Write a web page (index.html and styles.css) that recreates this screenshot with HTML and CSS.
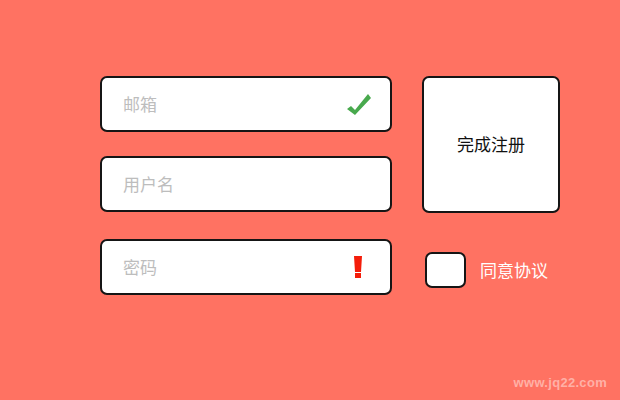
FILE: index.html
```html
<!DOCTYPE html>
<html lang="zh-CN">
<head>
    <meta charset="UTF-8">
    <meta name="viewport" content="width=device-width, initial-scale=1.0">
    <title>注册</title>
    <link rel="stylesheet" href="styles.css">
</head>
<body>
    <div class="form">
        <div class="fields">
            <div class="field">
                <span class="placeholder">邮箱</span>
                <svg class="icon-ok" width="24" height="22" viewBox="0 0 24 22">
                    <path d="M0 15 L4 12 L8 16 L21 0 L24 4 L8 21 Z" fill="#48a94d"/>
                </svg>
            </div>
            <div class="field field-user">
                <span class="placeholder">用户名</span>
            </div>
            <div class="field field-pass">
                <span class="placeholder">密码</span>
                <svg class="icon-warn" width="8" height="22" viewBox="0 0 8 22">
                    <path d="M0 0 H8 L7 16 H1 Z" fill="#f41d0a"/>
                    <rect x="1" y="17" width="6" height="5" fill="#f41d0a"/>
                </svg>
            </div>
        </div>
        <div class="side">
            <button class="submit">完成注册</button>
            <label class="agree">
                <span class="box"></span>
                <span class="agree-text">同意协议</span>
            </label>
        </div>
    </div>
    <div class="watermark">www.jq22.com</div>
</body>
</html>
```

FILE: styles.css
```css
body {
    margin: 0;
    height: 400px;
    background: #ff7262;
    font-family: "Noto Sans CJK SC", "Noto Sans", sans-serif;
    position: relative;
    overflow: hidden;
}
.form {
    display: flex;
    gap: 30px;
    padding: 76px 0 0 100px;
}
.fields {
    display: flex;
    flex-direction: column;
    width: 292px;
}
.field {
    height: 56px;
    box-sizing: border-box;
    background: #fff;
    border: 2px solid #151515;
    border-radius: 7px;
    display: flex;
    align-items: center;
    justify-content: space-between;
    padding: 0 19px 2px 21px;
}
.field-user {
    margin-top: 24px;
}
.field-pass {
    margin-top: 27px;
    padding-right: 28px;
}
.placeholder {
    color: #bdbdbd;
    font-size: 17px;
}
.icon-ok {
    display: block;
    margin-top: 3px;
}
.icon-warn {
    display: block;
    margin-top: 2px;
}
.side {
    display: flex;
    flex-direction: column;
}
.submit {
    width: 138px;
    height: 137px;
    background: #fff;
    border: 2px solid #151515;
    border-radius: 7px;
    font-family: inherit;
    font-size: 17px;
    color: #111;
    padding: 0 0 2px;
}
.agree {
    display: flex;
    align-items: center;
    gap: 14px;
    margin: 39px 0 0 3px;
}
.box {
    width: 41px;
    height: 36px;
    box-sizing: border-box;
    background: #fff;
    border: 2px solid #151515;
    border-radius: 7px;
}
.agree-text {
    color: #fff;
    font-size: 17px;
    padding-bottom: 2px;
}
.watermark {
    position: absolute;
    right: 13px;
    bottom: 10px;
    color: #ffb0a6;
    font-family: "Liberation Sans", Arial, sans-serif;
    font-weight: bold;
    font-size: 13px;
    letter-spacing: 0.3px;
}
```
